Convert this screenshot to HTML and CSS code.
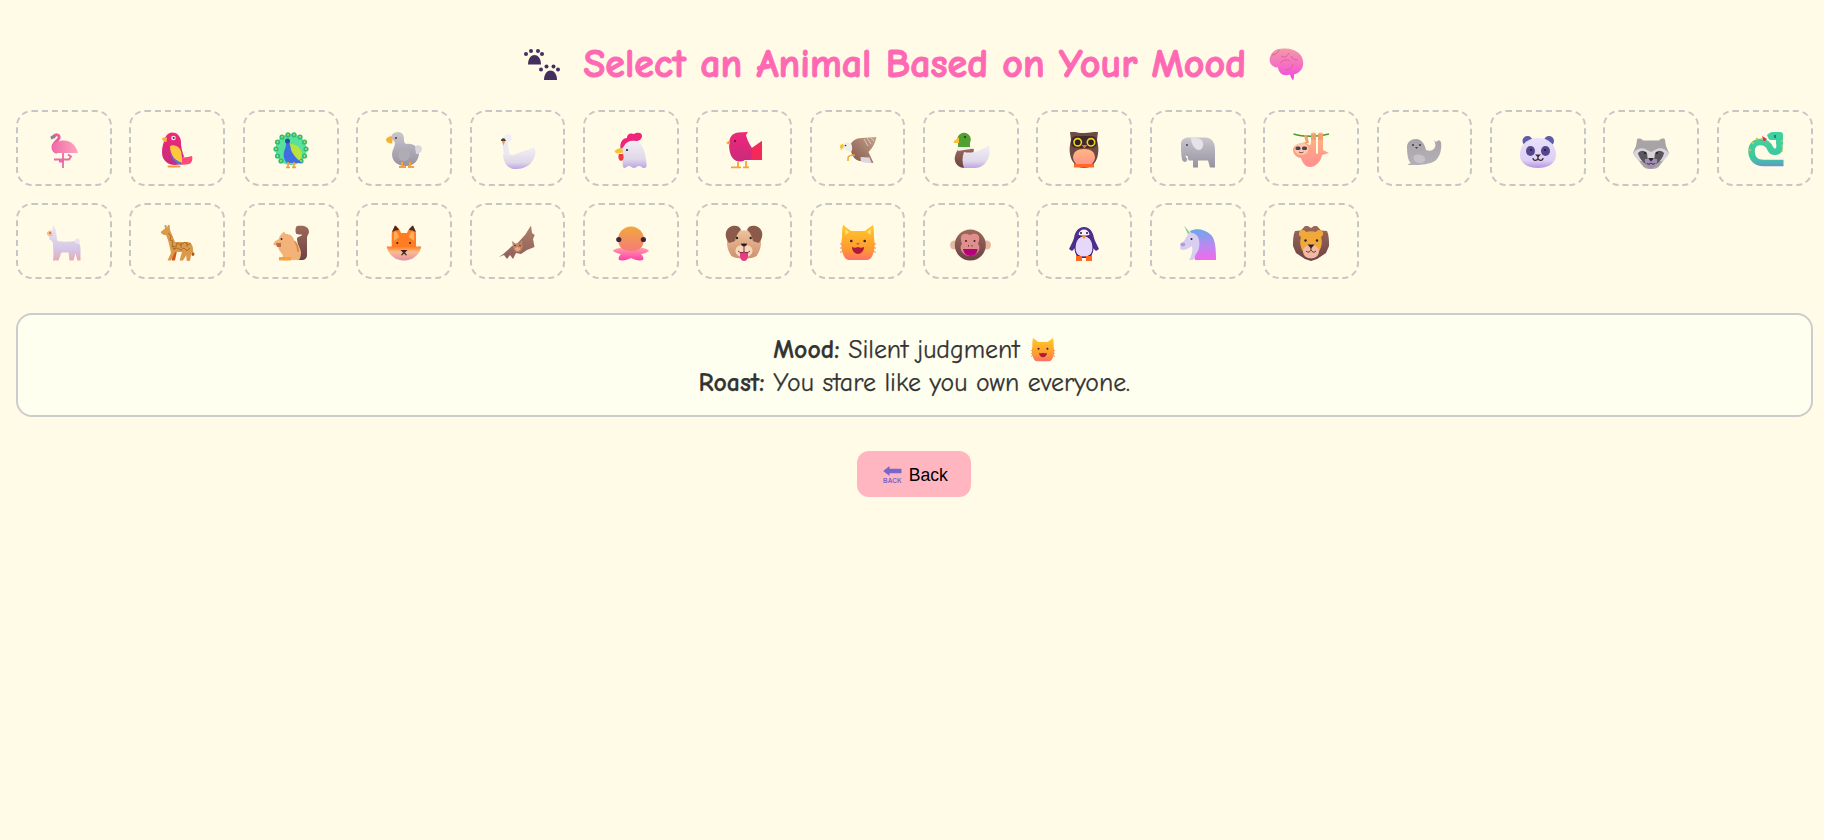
FILE: index.html
```html
<!DOCTYPE html>
<html lang="en">
<head>
<meta charset="utf-8">
<title>Select an Animal</title>
<link rel="stylesheet" href="styles.css">
</head>
<body>
<svg class="defs" aria-hidden="true">
  <defs>
    <linearGradient id="gPink" x1="0" y1="0" x2="1" y2="0"><stop offset="0" stop-color="#f06aa8"/><stop offset="1" stop-color="#ffa6bf"/></linearGradient>
    <linearGradient id="gMag" x1="0" y1="0" x2="0" y2="1"><stop offset="0" stop-color="#f0287a"/><stop offset="1" stop-color="#c92a7c"/></linearGradient>
    <linearGradient id="gGrey" x1="0" y1="0" x2="0" y2="1"><stop offset="0" stop-color="#c9c6ce"/><stop offset="1" stop-color="#97929f"/></linearGradient>
    <linearGradient id="gWhite" x1="0" y1="0" x2="0" y2="1"><stop offset="0" stop-color="#f3f0f6"/><stop offset=".7" stop-color="#dfd8e8"/><stop offset="1" stop-color="#bda3e6"/></linearGradient>
    <linearGradient id="gLlama" x1="0" y1="0" x2="0" y2="1"><stop offset="0" stop-color="#efe6f6"/><stop offset=".7" stop-color="#d4c6e4"/><stop offset="1" stop-color="#e8a9b4"/></linearGradient>
    <linearGradient id="gTan" x1="0" y1="0" x2="0" y2="1"><stop offset="0" stop-color="#ecc39a"/><stop offset="1" stop-color="#d08f70"/></linearGradient>
    <linearGradient id="gBowl" x1="0" y1="0" x2="0" y2="1"><stop offset="0" stop-color="#ff7a20"/><stop offset=".4" stop-color="#f9bd90"/><stop offset="1" stop-color="#e68fa8"/></linearGradient>
    <linearGradient id="gCat" x1="0" y1="0" x2="0" y2="1"><stop offset="0" stop-color="#ffc928"/><stop offset=".7" stop-color="#ff9a30"/><stop offset="1" stop-color="#ff6f6a"/></linearGradient>
    <linearGradient id="gBrown" x1="0" y1="0" x2="0" y2="1"><stop offset="0" stop-color="#9c6a58"/><stop offset="1" stop-color="#6d4248"/></linearGradient>
    <linearGradient id="gWing" x1="0" y1="0" x2="0" y2="1"><stop offset="0" stop-color="#ad806c"/><stop offset="1" stop-color="#8f6058"/></linearGradient>
    <linearGradient id="gEagle" x1="1" y1="0" x2="0" y2="1"><stop offset="0" stop-color="#c7a48e"/><stop offset="1" stop-color="#7f5348"/></linearGradient>
    <linearGradient id="gPeach" x1="0" y1="0" x2="0" y2="1"><stop offset="0" stop-color="#ffb77e"/><stop offset="1" stop-color="#ff8f90"/></linearGradient>
    <linearGradient id="gSnake" gradientUnits="userSpaceOnUse" x1="0" y1="0" x2="0" y2="35"><stop offset="0" stop-color="#45d49c"/><stop offset=".78" stop-color="#3ec5a0"/><stop offset="1" stop-color="#6a8fd0"/></linearGradient>
    <linearGradient id="gOcto" x1="0" y1="0" x2="0" y2="1"><stop offset="0" stop-color="#f2a63e"/><stop offset="1" stop-color="#f47a7a"/></linearGradient>
    <linearGradient id="gTent" x1="0" y1="0" x2="0" y2="1"><stop offset="0" stop-color="#ff9aa8"/><stop offset="1" stop-color="#ff3fa8"/></linearGradient>
    <linearGradient id="gPanda" x1="0" y1="0" x2="0" y2="1"><stop offset="0" stop-color="#e9e0fa"/><stop offset=".75" stop-color="#dccff5"/><stop offset="1" stop-color="#b792e0"/></linearGradient>
    <linearGradient id="gMane" x1="0" y1="0" x2="0" y2="1"><stop offset="0" stop-color="#6aa8ea"/><stop offset=".5" stop-color="#b88af0"/><stop offset="1" stop-color="#f06aea"/></linearGradient>
    <linearGradient id="gBrain" x1="0" y1="0" x2="0" y2="1"><stop offset="0" stop-color="#f39aa8"/><stop offset=".6" stop-color="#f56ac8"/><stop offset="1" stop-color="#ef45e0"/></linearGradient>
    <linearGradient id="gSeal" x1="0" y1="0" x2="0" y2="1"><stop offset="0" stop-color="#a8a4a8"/><stop offset="1" stop-color="#b5b0b8"/></linearGradient>
  </defs>
</svg>

<h1 class="title">
  <svg class="paw-ico" viewBox="0 0 36 31"><g fill="#43305e"><path d="M4 15.500C4 9 7.500 6 10.500 6S17 9 17 15.500Z"/><circle cx="2" cy="5" r="2"/><circle cx="7" cy="2" r="2"/><circle cx="14" cy="2" r="2"/><circle cx="18" cy="5" r="2"/><path d="M20 31c0-6.500 3.500-9.500 6.500-9.500S33 24.500 33 31Z"/><circle cx="17" cy="20.500" r="2"/><circle cx="22.500" cy="17.500" r="2"/><circle cx="29.500" cy="17.500" r="2"/><circle cx="34" cy="20.500" r="2"/></g></svg>
  <span>Select an Animal Based on Your Mood</span>
  <svg class="brain-ico" viewBox="0 0 35 33"><path fill="url(#gBrain)" d="M.5 12C1 5 6 .5 14 .5c6-.5 11 1 15 4 4 3 6 8 5 13-1 5-5 8-9 9 0 2 0 4-1 6l-2-3-1-3c-3 1-7 1-9-1-2-2-3-4-3-6-5 0-8-3-8.500-7.500Z"/><path fill="none" stroke="#e0509a" stroke-width=".8" d="M10 2c-1 3-4 5-7 5m9 1c3 2 6 1 8-3m-9 10c3-3 6-4 10-2m-4 9c3 0 6-2 7-6m-2-8c1 3 4 4 7 4"/></svg>
</h1>

<div class="grid">
  <button class="card"><svg class="ico" viewBox="0 0 36 36"><path fill="none" stroke="#ea5f9c" stroke-width="3" stroke-linecap="round" d="M8 5C9 2 14 2 13 6 12 9 7 11 7 15c0 2 1 4 3 5"/><path fill="url(#gPink)" d="M6 15c0-4 6-6.500 12-6.500 7 0 12 5 14 12.500H12c-4 0-6-3-6-6Z"/><path fill="#8c868c" d="M4.500 4.500 8 2.500l1.500 2-3 2.500-1.500.5Z"/><path fill="none" stroke="#ea6aa6" stroke-width="1.800" d="M17 21v15M8 27.500h15l2-3-3-2M13 29.500h5"/></svg></button>
  <button class="card"><svg class="ico" viewBox="0 0 36 36"><path fill="url(#gMag)" d="M13 .5c6 0 9 5 9 10 0 4 1 9 3 14l-5 8c-8 2-17-2-17-12 0-5 1-8 2-11C6 4 9 .5 13 .5Z"/><path fill="#ff4a7a" d="M21 25c4 1 8 0 12-1 1 3 0 7-3 8-4 1-8 1-12 0Z"/><path fill="#f8b630" d="M3 6.500C4 5.500 6 5 8 5.500l-.5 4.500-3-.5Z"/><circle cx="14.500" cy="6" r="2.300" fill="#efe8ea"/><circle cx="14.700" cy="6" r="1" fill="#3a2a3a"/><path fill="#ffc83c" d="M11 14c4-2 9 0 11 5 1 4 1 8 1 12l-6-3c-4-3-6-9-6-14Z"/><path fill="#3f7fe6" d="M11 20c2 5 6 9 12 11l-1 2c-6-2-10-7-11-13Z"/><rect x="8.500" y="33.500" width="13" height="2" rx="1" fill="#f29a4a"/></svg></button>
  <button class="card"><svg class="ico" viewBox="0 0 36 36"><circle cx="18" cy="17.500" r="15.500" fill="#58e09c"/><g fill="#2dbd76"><circle cx="3" cy="17" r="2.600"/><circle cx="4.500" cy="10" r="2.600"/><circle cx="9" cy="5" r="2.600"/><circle cx="15" cy="2.800" r="2.600"/><circle cx="21" cy="2.800" r="2.600"/><circle cx="27" cy="5" r="2.600"/><circle cx="31.500" cy="10" r="2.600"/><circle cx="33" cy="17" r="2.600"/><circle cx="4.500" cy="24" r="2.600"/><circle cx="31.500" cy="24" r="2.600"/><circle cx="8" cy="29" r="2.600"/><circle cx="28" cy="29" r="2.600"/></g><g fill="#d8d84a"><circle cx="3" cy="17" r=".9"/><circle cx="4.500" cy="10" r=".9"/><circle cx="9" cy="5" r=".9"/><circle cx="15" cy="2.800" r=".9"/><circle cx="21" cy="2.800" r=".9"/><circle cx="27" cy="5" r=".9"/><circle cx="31.500" cy="10" r=".9"/><circle cx="33" cy="17" r=".9"/><circle cx="4.500" cy="24" r=".9"/><circle cx="31.500" cy="24" r=".9"/><circle cx="8" cy="29" r=".9"/><circle cx="28" cy="29" r=".9"/></g><path fill="#b8e23e" d="M18 12c6 0 11 5 11 11 0 4-4 7-9 7s-6-18-2-18Z"/><path fill="#3f6ee0" d="M13 10h3c1 3 2 6 2 8 2 5 6 9 11 13H14c-4-4-4-10-2-14 1-2 1-5 1-7Z"/><circle cx="14.500" cy="9" r="2.500" fill="#2d4aa8"/><path stroke="#f5a13c" stroke-width="1.600" d="M15 30v5m6-5v5M13 35.400h4m2 0h4"/></svg></button>
  <button class="card"><svg class="ico" viewBox="0 0 36 36"><path fill="url(#gGrey)" d="M5 6c0-4 4-6 7-6 4 0 6 3 6 7 0 2 0 4 2 5 6-1 12 2 13 9 0 7-5 13-13 13S6 30 6 22c0-4 3-7 3-11 0-2-3-3-4-5Z"/><path fill="#f6b130" d="M0 7c2-2 4-3 6-2.500 0 3 1 5 0 7-3 0-6-1-6-4.500Z"/><circle cx="10" cy="6" r="1" fill="#3a3440"/><circle cx="18" cy="23" r="6" fill="#b0acb6"/><path fill="#d9d6de" d="M29 15c2-3 6-2 7 1 0 4-3 6-6 6Z"/><path stroke="#f4a23c" stroke-width="2" d="M16 30v5m8-5v5M13 35h7m2 0h6"/></svg></button>
  <button class="card"><svg class="ico" viewBox="0 0 36 36"><path fill="none" stroke="#ece8f0" stroke-width="5.500" stroke-linecap="round" d="M9.500 6C4.500 6 6 13 7 18c0 5 3 8 6 8"/><circle cx="9" cy="6" r="3.700" fill="#f1edf4"/><path fill="#f59a2e" d="M2.500 8h4l-2 5.500Z"/><path fill="#4a4048" d="M2 8c1-2 3-2 4-1l1 2-5 0Z"/><path fill="url(#gWhite)" d="M4 22c5 3 12 1 18-2 5-2 10-3 13-5 2 3 2 8-1 13-3 6-10 9-17 9-9 0-13-7-13-15Z"/></svg></button>
  <button class="card"><svg class="ico" viewBox="0 0 36 36"><path fill="url(#gWhite)" d="M9 21c-2-7 2-14 10-14 8 0 12 8 14 20 1 7 1 9-2 9-2 0-3-2-5-2s-3 2-5 2-3-2-5-2-3 2-5 2c-2-1-1-8-2-15Z"/><path fill="#f0247a" d="M8 18C6 12 9 6 14 6c0-4 3-5.500 7-4 3-2 8-2 8 2 0 3-3 5-6 5-6-1-10 1-12 5Z"/><path fill="#f6c230" d="M1.500 19c2-2 5-3 7.500-3l1 4.500-5 1c-2 0-3-1-3.500-2.500Z"/><path fill="#ef3a40" d="M6 22h4c1 3 1 6-2 7-3-1-3-5-2-7Z"/><circle cx="14" cy="18" r="1.100" fill="#2c2438"/></svg></button>
  <button class="card"><svg class="ico" viewBox="0 0 36 36"><path fill="url(#gMag)" d="M3 12c0-6 3-11 9-11.500L22 0l-2 3c1 4 3 9 6 13l10-7v19H19c-7 4-16 1-16-16Z"/><path fill="#f5285a" d="M26 16l10-7v19H25Z"/><path fill="#f4a02a" d="M0 11l4-3v5Z"/><circle cx="9" cy="9" r="1" fill="#4a1030"/><path stroke="#f4a23c" stroke-width="1.800" d="M12 30v5m8-6v6M5 35.300h10m2 0h6"/></svg></button>
  <button class="card"><svg class="ico" viewBox="0 0 36 36"><path fill="url(#gEagle)" d="M10 15c1-6 6-9 12-9l14.500-1c-1 6-4 11-8 15l5 11-13-2c-5 0-9-5-10.500-14Z"/><path fill="none" stroke="#e8d4c8" stroke-width=".8" d="M24 7l4 7m-1-8 4 6m0-6 3 3"/><path fill="#f0ece8" d="M2 13c2-2.500 5-2.500 8.500-2 2 2 2 6 1 8.500-4 0-8-2-9.500-6.500Z"/><path fill="#f5c230" d="M0 15c0-2 1-3 3-3l1 3-2 2-1 1Z"/><circle cx="5.500" cy="13.500" r=".8" fill="#2a2028"/><path fill="none" stroke="#f0a928" stroke-width="1.500" d="M15 23c-3 0-7 0-7 3v3"/><path fill="#dcd8e2" d="M20.500 25l9 .5 2 5c-4 .5-8 .5-10.500-1Z"/></svg></button>
  <button class="card"><svg class="ico" viewBox="0 0 36 36"><path fill="url(#gBrown)" d="M6 16c-3 4-5 9-4 13 1 4 5 7 9 7h7l3-19Z"/><path fill="url(#gWhite)" d="M11 20c8 2 16-1 25-7 1 5 1 9-1 14-3 6-8 9-13 9H11c-2-5-2-11 0-16Z"/><path fill="#f0edf4" d="M5 15l10-1 3 3-13 2Z"/><circle cx="11" cy="7.500" r="6.800" fill="#52a032"/><path fill="#52a032" d="M5 8h12v7H5Z"/><path fill="#f5c23a" d="M.5 10C2 8 4 6.500 6 5.500v5.500H2c-1 0-1.500-.5-1.500-1Z"/><circle cx="12" cy="5" r="1" fill="#16301a"/></svg></button>
  <button class="card"><svg class="ico" viewBox="0 0 36 36"><path fill="#6d4a42" d="M4 0h5c3 1 7 1 10 1 4 0 7-1 9-1h4l-1 8c1 4 2 9 1 14-1 8-6 14-14 14S5 29 4 22c-1-5 0-10 1-14Z"/><path fill="url(#gPeach)" d="M18 17c7 0 11 3 11 9-1 5-5 9-11 9S8 31 7 26c0-6 4-9 11-9Z"/><path fill="#ff6a28" d="M8 32h20v3.500H8Z"/><rect x="5" y="4" width="26" height="12" rx="5.500" fill="#3f2a2e"/><circle cx="11.700" cy="10.300" r="3.700" fill="#2c2228" stroke="#f6d21e" stroke-width="1.600"/><circle cx="25" cy="10.300" r="3.700" fill="#2c2228" stroke="#f6d21e" stroke-width="1.600"/><path fill="#f4692e" d="M15.500 13h6l-3 3.500Z"/></svg></button>
  <button class="card"><svg class="ico" viewBox="0 0 36 36"><path fill="url(#gGrey)" d="M1 12c0-4 3-6.500 8-6.500h16c7 0 10 5 10 12v18h-5l-2-7H18v7h-5v-7H9c-1 0-1-2-1-4l-3-1c1 2 3 3 2 5s-4 2-5-1c-1-5-1-11-1-16Z"/><path fill="#e5e2ea" d="M11 6h4c6 0 9 3 8 8-1 4-4 5-7 3-3-2-5-7-5-11Z"/><circle cx="7" cy="13" r=".9" fill="#3a3440"/></svg></button>
  <button class="card"><svg class="ico" viewBox="0 0 36 36"><path fill="none" stroke="#4c9c30" stroke-width="1.600" d="M.5 2C10 5 25 5 36 2"/><path fill="url(#gPeach)" d="M13 10c3 4 5 4 5 0V2c0-2 5-2 5 0v19c0 1 2 1 2 0V2c0-2 5-2 5 0v16c2 1 4 2 6 3l-7 2c-1 6-6 12-12 12-5 0-8-5-9-9-4 0-8-4-8-8s4-6 8-7Z"/><path fill="#f0a06e" d="M11 3h3l2 8h-3zM18 2h5v6h-5zM25 2h5v6h-5z"/><ellipse cx="8.500" cy="17" rx="7" ry="6" fill="#ffc6b0"/><rect x="2.500" y="14.500" width="5" height="3.500" rx="1.500" fill="#4a4650"/><rect x="9" y="14.500" width="5" height="3.500" rx="1.500" fill="#4a4650"/><path fill="none" stroke="#7a4030" d="M6 20c1.500 1 3 1 4.500 0"/></svg></button>
  <button class="card"><svg class="ico" viewBox="0 0 36 36"><path fill="url(#gSeal)" d="M1 15C1 10 5 7 10 7c6 0 9 6 10 11 4 2 8 0 9-3 1-2 0-5-1-7l2 2 3-2 2 2c1 7-1 15-6 19-5 3-14 4-19 4H2c0-1 2-2 3-2C2 29 1 22 1 15Z"/><path fill="#c6c3c8" d="M8 24c4-3 9-1 11 2 1 2-1 5-5 5-4 0-8-3-6-7Z"/><circle cx="7" cy="13" r=".9" fill="#332b33"/><circle cx="14" cy="13" r=".9" fill="#332b33"/><path fill="#5c3838" d="M9 15h3l-1.500 2Z"/></svg></button>
  <button class="card"><svg class="ico" viewBox="0 0 36 36"><circle cx="7.500" cy="9" r="5" fill="#5c5ca8"/><circle cx="29" cy="9" r="5" fill="#5c5ca8"/><path fill="url(#gPanda)" d="M18 6c10 0 18 6 18 17 0 9-9 13-18 13S0 32 0 23C0 12 8 6 18 6Z"/><ellipse cx="10.500" cy="19" rx="4.500" ry="5" fill="#55478e"/><ellipse cx="25.500" cy="19" rx="4.500" ry="5" fill="#55478e"/><circle cx="11" cy="18" r="1" fill="#1f1830"/><circle cx="25" cy="18" r="1" fill="#1f1830"/><path fill="#3a2830" d="M15 22.500h6l-3 3Z"/><path fill="none" stroke="#3a2830" stroke-width="1.200" d="M18 25v1.500M13 26c0 3 4 3 5 .5 1 2.500 5 2.500 5-.5"/></svg></button>
  <button class="card"><svg class="ico" viewBox="0 0 36 36"><path fill="#a8a4a6" d="M4 8c0-2 4-2 6 .5h16c2-2.500 6-2.500 6-.5l1 6 3 7-9 12c-2 3-4 4-9 4s-7-1-9-4L0 21l3-7Z"/><path fill="#d8d4da" d="M0 21c4-5 10-6 14-3l4 2 4-2c4-3 10-2 14 3-1 4-4 6-7 8H7c-3-2-6-4-7-8Z"/><path fill="#5a5660" d="M5 21c3-3 6-3 9 0l1 8c0 4 2 7 3 7 1 0 3-3 3-7l1-8c3-3 6-3 9 0-1 5-5 10-13 15C10 31 6 26 5 21Z"/><path fill="#a08fb0" d="M12 27h12c1 4-2 9-6 9s-7-5-6-9Z"/><path fill="#2e2428" d="M15 26h6l-3 3.500Z"/><circle cx="12" cy="21" r="1" fill="#1f181c"/><circle cx="24" cy="21" r="1" fill="#1f181c"/><path fill="none" stroke="#2e2428" d="M14 31c1 2 3 1 4 0 1 1 3 2 4 0"/></svg></button>
  <button class="card"><svg class="ico" viewBox="0 0 36 36"><path fill="none" stroke="url(#gSnake)" stroke-width="6.500" d="M32.500 8v7c0 6-7 6-9 2-2-5-5-7-10-7-6 0-9 4-9 9 0 8 5 12 12 12h20"/><path fill="#3fd0a0" d="M20 3c2-2 4-3 6-3h7c2 0 3 1 3 3v9h-7V8h-5c-2 0-3-2-4-5Z"/><path fill="#f0255a" d="M15 4l5 3-2 2-4-1 2-1Z"/><rect x="27.500" y="3" width="1" height="3" fill="#1a2a28"/><g fill="#c9c93a"><circle cx="3" cy="18" r="1.200"/><circle cx="6" cy="11" r="1.200"/><circle cx="10" cy="7" r="1.200"/><circle cx="15" cy="7" r="1.200"/><circle cx="35" cy="9" r="1"/><circle cx="35" cy="14" r="1"/><circle cx="35" cy="19" r="1"/></g></svg></button>

  <button class="card"><svg class="ico" viewBox="0 0 36 36"><path fill="url(#gLlama)" d="M7 0l2.500 4c1 4 1 9 2 12 6 1 12 1 17 0 4 0 6 3 6 8v11.500h-3l-2-7-2 7h-4l-1-8h-7l-3 8h-3l1-8-1 8H7c1-7 0-11 0-16 0-3-2-5-4-5V9l3-3Z"/><circle cx="31.300" cy="16" r="2.600" fill="#ece4f2"/><path fill="#ffbe8a" d="M.7 8c1-2 3-3 5-2l1 5H3c-1 0-2-1-2.300-3Z"/><circle cx="4" cy="8" r=".7" fill="#30242c"/></svg></button>
  <button class="card"><svg class="ico" viewBox="0 0 36 36"><path fill="#d2561e" d="M12 26h6l-2 9.500h-3ZM27 26h5l-1 9.500h-3Z"/><path fill="#db9a48" d="M1.600 7 6 3.500 5.500 0h1.700L8 2.800 9 0h1.500l.5 5 5 12h12c4 0 6 3 6 8l1 6h-2l-1-4-1 8.500h-3.500l.5-6.500-4 6.500h-3.500L23 27h-7l-4 8.500H8.500L12 28c-1-6-3-14-5-18-2 0-4.500-.5-5.400-3Z"/><g fill="none" stroke="#9a5c22" stroke-width=".7"><path d="M9 8l3 3-1 4 3 1-1 5 4 1 1-4 4 2 4-3 3 3 3-2m-18 6 4-1 4 2 3-2 3 3 3-3M13 21l3 4m6-7v5m6-6v5"/></g><circle cx="34" cy="29" r="1.500" fill="#9a5a22"/></svg></button>
  <button class="card"><svg class="ico" viewBox="0 0 36 36"><path fill="url(#gBrown)" d="M24 1c6-1 12 0 12 6 0 2-2 3-2 6v17c0 3-2 5-5 5H24c3 0 2-3 2-8 0-6-2-10-2-13 0-3 4-2 5-4 0-1-3 0-5-1-2 0-2-7 0-8Z"/><path fill="#f2b278" d="M6 14c0-3 4-7 5-7s1 2 2 2c4 0 7 2 8 6 4 3 6 7 7 12 0 4-1 8-3 8H6l1-3c2 0 3 0 3-1-1-3-5-6-5-10L1 20c-2-1 2-5 5-6Z"/><path fill="#d88a50" d="M22 16c3 3 4 7 4 11l-2-.5c0-4-1-7-3-10Z"/><path fill="#f7a03e" d="M6 32h12v3.500H6Z"/><path fill="#b5704a" d="M3 18h5v4H4Z"/><circle cx="8.500" cy="14" r=".9" fill="#2e2020"/></svg></button>
  <button class="card"><svg class="ico" viewBox="0 0 36 36"><path fill="#ff7d22" d="M5.700 22V8L9 .5c3 1.500 5 4.500 6 7.500h6c1-3 3-6 6-7.500L30 8v14Z"/><path fill="#ffae5c" d="M8 8l1.500-2c2 1.500 3 4 3.500 6l-5 4ZM28 8l-1.500-2c-2 1.500-3 4-3.500 6l5 4Z"/><path fill="#4a2a28" d="M9 .5 6 7l3.500-1.500L13 5C12 3 10.500 1.500 9 .5ZM27 .5 30 7l-3.500-1.500L23 5c1-2 2.500-3.500 4-4.500Z"/><path fill="url(#gBowl)" d="M.7 21.500h34.600C33 31 26 35.500 18 35.500S3 31 .7 21.500Z"/><circle cx="11.300" cy="18" r="1" fill="#2a2024"/><circle cx="24" cy="18" r="1" fill="#2a2024"/><path fill="#3a2428" d="M14.500 25h7l-2.500 2.500 2 2.500-1 .5-2-2-2 2-1-.5 2-2.500Z"/></svg></button>
  <button class="card"><svg class="ico" viewBox="0 0 36 36"><path fill="url(#gWing)" d="M32 .5l1 7.500 2.700 2-1.700 4 1.500 8-7.500 3-6 4-5-1-3 6-3-4-3 4-3-4-5 2c6-4 10-8 13-11 5-1 9-7 13-11Z"/><path fill="#c08868" d="M14 22l-1-6 3.500 2.500h4l2.500-3 .5 6.500c0 3-3 5-5 5s-4-2-4.500-5Z"/><path fill="#f0a484" d="M16 23c1-1 4-1 5 0 0 2-1 3-2.500 3S16 25 16 23Z"/><circle cx="16" cy="20.500" r=".7" fill="#2a1c1c"/><circle cx="21" cy="20.500" r=".7" fill="#2a1c1c"/></svg></button>
  <button class="card"><svg class="ico" viewBox="0 0 36 36"><circle cx="18" cy="14.500" r="13" fill="url(#gOcto)"/><path fill="url(#gTent)" d="M8 23c-3 0-7 1-8 3 3 2 6 3 8 3-2 2-3 4-2 6 4 1 8 0 12-2 4 2 8 3 12 2 1-2 0-4-2-6 2 0 5-1 8-3-1-2-5-3-8-3-2 2-6 3-10 3s-8-1-10-3Z"/><circle cx="5.800" cy="14.500" r="2.600" fill="#3a2840"/><circle cx="30.400" cy="14.500" r="2.600" fill="#3a2840"/></svg></button>
  <button class="card"><svg class="ico" viewBox="0 0 36 36"><path fill="url(#gTan)" d="M6 6h24c3 0 5 6 5 12s-2 9-4 13c-2 2-6 3-13 3s-11-1-13-3c-2-4-4-7-4-13S3 6 6 6Z" transform="translate(0 -.5)"/><path fill="#f6d8b6" d="M11 22c2-2 5-2 7-.5 2-1.500 5-1.500 7 .5 3 3 2 10-7 10s-10-7-7-10Z"/><path fill="#8b5a4a" d="M6 1c4-1 8 0 9 4-3 2-5 6-6 11-1 1-4 1-6 2-2-3-4-6-3-11C1 4 3 2 6 1ZM30 1c-4-1-8 0-9 4 3 2 5 6 6 11 1 1 4 1 6 2 2-3 4-6 3-11-1-3-3-5-6-6Z"/><circle cx="11" cy="13" r="1.200" fill="#2c2024"/><circle cx="24.700" cy="13" r="1.200" fill="#2c2024"/><path fill="#2c2024" d="M15 18.500h6c0 2-2 3-3 3s-3-1-3-3Z"/><path fill="#e83a80" d="M14 27h8v4c0 3-2 5-4 5s-4-2-4-5Z"/><path stroke="#7a3050" d="M18 21v6M12 26c2 2 4 2 6 1 2 1 4 1 6-1" fill="none"/></svg></button>
  <button class="card"><svg class="ico" viewBox="0 0 36 36"><path fill="url(#gCat)" d="M3 0l8 6h14l8-6c1 4 1 8 1 13 1 4 1 11-1 16-1 3-3 6-6 6H9c-3 0-5-3-6-6-2-5-2-12-1-16 0-5 0-9 1-13Z"/><path fill="#ffe07a" d="M5 4l4 3-3.500 3ZM31 4l-4 3 3.500 3Z"/><circle cx="11.300" cy="16" r="1.300" fill="#3a2424"/><circle cx="24.700" cy="16" r="1.300" fill="#3a2424"/><path fill="#f03a8a" d="M16 18h4l-2 2Z"/><path fill="#b0183c" d="M12 22c2 1 4 1 6 0 2 1 4 1 6 0 0 4-3 7-6 7s-6-3-6-7Z"/><path fill="none" stroke="#f58a60" stroke-width="1" d="M3 20L0 18.500M3 23H0M3 26l-3 1.500M33 20l3-1.500M33 23h3M33 26l3 1.500"/></svg></button>
  <button class="card"><svg class="ico" viewBox="0 0 36 36"><circle cx="1.500" cy="20" r="4.500" fill="#e6b8a0"/><circle cx="33.500" cy="20" r="4.500" fill="#e6b8a0"/><circle cx="17.300" cy="20" r="15.500" fill="url(#gBrown)"/><path fill="#e0908c" d="M9 10c3-2 5-1 8 0 3-1 5-2 8 0 2 2 1 6 0 9 2 2 2 6-1 9-4 4-10 4-14 0-3-3-3-7-1-9-1-3-2-7 0-9Z"/><circle cx="13" cy="16" r="1" fill="#3a2428"/><circle cx="21.500" cy="16" r="1" fill="#3a2428"/><path fill="#b8007e" d="M10 24h14.500c0 4-3 7-7 7s-7-3-7.500-7Z"/><path stroke="#6a3038" d="M15.500 20v1.500M19 20v1.500"/></svg></button>
  <button class="card"><svg class="ico" viewBox="0 0 36 36"><path fill="#4f2d8c" d="M18 2c6 0 9 5 10 11 1 3 3 7 5 11l-3 2-3-3c0 4-1 8-3 10H12c-2-2-3-6-3-10l-3 3-3-2c2-4 4-8 5-11C9 7 12 2 18 2Z"/><path fill="#f5f0ff" d="M18 4.500c3 0 5 2 5.500 5C22 11 14 11 12.500 9.500 13 6.500 15 4.500 18 4.500Z"/><path fill="#e6d8fa" stroke="#3b1e72" stroke-width="1" d="M18 11c6 0 9 6 9 12 0 6-4 9-9 9s-9-3-9-9c0-6 3-12 9-12Z"/><circle cx="15" cy="8" r="1" fill="#221038"/><circle cx="21" cy="8" r="1" fill="#221038"/><path fill="#ff8c30" d="M15 10h6l-3 4Z"/><path fill="#ff6a1e" d="M10 31h6v5h-6ZM20 31h6v5h-6Z"/></svg></button>
  <button class="card"><svg class="ico" viewBox="0 0 36 36"><path fill="#90d0a0" d="M4 .5l6 7-2 2Z"/><path fill="url(#gMane)" d="M10 6c6-3 14-2 20 3 5 4 6 12 6 26H15c-2-4 2-10 2-12Z"/><path fill="#d9cdf0" d="M9 8c5-1 9 2 10 7 1 6 0 10-3 14l-3 6H9c3-5 4-9 3-14-3 2-6 4-9 4-3 0-3.500-2-2.500-4C3 17 6 13 9 8Z"/><ellipse cx="2.800" cy="19.500" rx="2.500" ry="2" fill="#b49ae0"/><circle cx="11.500" cy="14" r="1" fill="#2e2038"/></svg></button>
  <button class="card"><svg class="ico" viewBox="0 0 36 36"><path fill="url(#gBrown)" d="M2 6l6-.5L12 1h3l3 2 3-2h3l4 4.500 6 .5c2 4 2 10 2 15l-3 7-9 6-6 2-6-2-9-6-3-7C0 16 0 10 2 6Z"/><path fill="#f0a838" d="M7 6a4 4 0 0 1 6 1c3-1 7-1 10 0a4 4 0 0 1 6-1c2 2 1 5-1 6 2 6 0 12-3 16H11c-3-4-5-10-3-16-2-1-3-4-1-6Z"/><ellipse cx="18" cy="26.500" rx="8" ry="7" fill="#f2b8a0"/><circle cx="12.500" cy="15.500" r="1.200" fill="#2c2024"/><circle cx="24" cy="15.500" r="1.200" fill="#2c2024"/><path fill="#2c2024" d="M14.500 19.500h7l-3.500 4Z"/><path fill="none" stroke="#5a3030" d="M18 23v2M13 26c2 2 4 1 5-1 1 2 3 3 5 1"/></svg></button>
</div>

<div class="result">
  <div><strong>Mood:</strong> Silent judgment <svg class="ico-inline" viewBox="0 0 36 36"><path fill="url(#gCat)" d="M3 0l8 6h14l8-6c1 4 1 8 1 13 1 4 1 11-1 16-1 3-3 6-6 6H9c-3 0-5-3-6-6-2-5-2-12-1-16 0-5 0-9 1-13Z"/><circle cx="11.300" cy="16" r="1.500" fill="#3a2424"/><circle cx="24.700" cy="16" r="1.500" fill="#3a2424"/><path fill="#b0183c" d="M12 22c2 1 4 1 6 0 2 1 4 1 6 0 0 4-3 7-6 7s-6-3-6-7Z"/><path fill="none" stroke="#f58a60" stroke-width="1.400" d="M3 20L0 18.500M3 23H0M3 26l-3 1.500M33 20l3-1.500M33 23h3M33 26l3 1.500"/></svg></div>
  <div><strong>Roast:</strong> You stare like you own everyone.</div>
</div>

<div class="actions">
  <button class="back"><svg class="back-ico" viewBox="0 0 22 22"><path fill="#7a66c8" d="M2.200 8 8.500 3v2.700h12v4.600h-12V13Z"/><text x="11.300" y="20" class="back-word">BACK</text></svg><span class="back-label">Back</span></button>
</div>
</body>
</html>
```
FILE: styles.css
```css
* { box-sizing: border-box; }
html, body { margin: 0; }
body {
  min-height: 840px;
  padding: 16px 11.5px 16px 16px;
  background: #fffbe6;
  font-family: "Comic Neue", "Liberation Sans", sans-serif;
  color: #333;
}
.defs { display: block; width: 0; height: 0; }
.title {
  display: flex;
  justify-content: center;
  align-items: center;
  gap: 23px;
  margin: 26px 0 24px;
  height: 44px;
  font-size: 40px;
  line-height: 44px;
  font-weight: 700;
  color: #ff69b4;
  -webkit-text-stroke: 1px #ff69b4;
}
.paw-ico { width: 36px; height: 31px; }
.brain-ico { width: 35px; height: 33px; }
.grid {
  display: grid;
  grid-template-columns: repeat(16, 1fr);
  gap: 17.6px;
}
.card {
  display: flex;
  justify-content: center;
  padding: 20px 0 0;
  height: 75.8px;
  background: transparent;
  border: 2px dashed #c6c6c6;
  border-radius: 16px;
}
.ico { display: block; width: 36px; height: 36px; overflow: visible; flex: none; }
.result {
  margin-top: 34px;
  padding: 18px 16px 14px;
  height: 103.4px;
  background: #fffff0;
  border: 2px solid #ccc;
  border-radius: 16px;
  font-size: 25.8px;
  line-height: 33.3px;
  text-align: center;
  -webkit-text-stroke: 0.25px #333;
}
.ico-inline { display: inline-block; width: 24px; height: 24px; vertical-align: -4px; margin-left: 3px; }
.actions { display: flex; justify-content: center; margin-top: 34.4px; }
.back {
  display: flex;
  align-items: center;
  gap: 6px;
  height: 46px;
  padding: 0 23.5px;
  background: #ffb6c1;
  border: 0;
  border-radius: 12px;
  font-family: "Liberation Sans", Arial, sans-serif;
  font-size: 17.6px;
  color: #000;
}
.back-label { padding-top: 4px; }
.back-ico { width: 22px; height: 22px; }
.back-word { font: 700 6.4px "Liberation Sans", sans-serif; fill: #7a66c8; text-anchor: middle; }
```
